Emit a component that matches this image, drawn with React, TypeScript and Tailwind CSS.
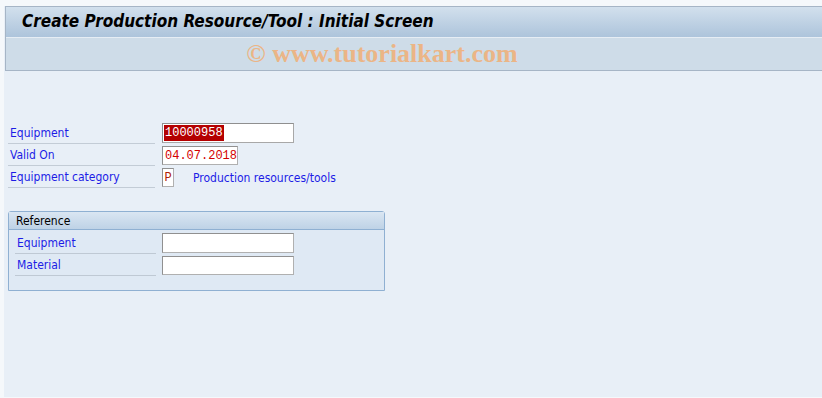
import React from "react";

const labelFont = { fontFamily: "'DejaVu Sans Condensed', 'DejaVu Sans', sans-serif" };

function Row({
  label,
  children,
}: {
  label: string;
  children?: React.ReactNode;
}) {
  return (
    <div className="flex h-[22px] items-stretch">
      <div
        className="w-[147px] flex items-center border-b border-[#c3ccd6] text-[12px] text-[#1c1ce6] pl-[2px] pt-[1px] shrink-0"
        style={labelFont}
      >
        {label}
      </div>
      {children}
    </div>
  );
}

export default function App() {
  return (
    <div className="w-[822px] h-[398px] bg-[#f5f8fb] pt-[6px] pl-[4px] pb-[1px] overflow-hidden">
      <div className="h-full bg-[#e8eff7] flex flex-col">
        {/* Header */}
        <div className="ml-[1px] border-t border-l border-b border-[#a6b5c6]">
          <div className="h-[30px] bg-gradient-to-b from-[#d2e0ed] to-[#adc4db] flex items-center pl-[16px]">
            <span
              className="text-[17px] font-bold italic text-black"
              style={{ fontFamily: "'DejaVu Sans Condensed', 'DejaVu Sans', sans-serif" }}
            >
              Create Production Resource/Tool : Initial Screen
            </span>
          </div>
          <div className="h-[1px] bg-[#e6edf4]" />
          <div className="h-[32px] bg-[#cedce8] flex items-center justify-center pr-[64px] pb-[1px]">
            <span
              className="text-[26px] font-bold text-[#ebb586]"
              style={{ fontFamily: "'Liberation Serif', serif" }}
            >
              © www.tutorialkart.com
            </span>
          </div>
        </div>

        {/* Main fields */}
        <div className="mt-[51px] pl-[4px] flex flex-col">
          <Row label="Equipment">
            <div className="ml-[7px] mt-[1px] h-[20px] w-[132px] bg-white border border-[#a8a8a8] border-t-[#8f8f8f] border-l-[#8f8f8f] flex items-center pl-[1px]">
              <span
                className="bg-[#b40000] text-white text-[12px] leading-[16px] px-[1px]"
                style={{ fontFamily: "'Liberation Mono', monospace" }}
              >
                10000958
              </span>
            </div>
          </Row>
          <Row label="Valid On">
            <div className="ml-[7px] mt-[2px] h-[19px] w-[76px] bg-white border border-[#b0b0b0] border-t-[#909090] border-l-[#909090] flex items-center pl-[2px]">
              <span
                className="text-[#d40000] text-[12px] leading-[16px]"
                style={{ fontFamily: "'Liberation Mono', monospace" }}
              >
                04.07.2018
              </span>
            </div>
          </Row>
          <Row label="Equipment category">
            <div className="ml-[7px] mt-[2px] h-[19px] w-[12px] bg-white border border-[#b0b0b0] border-t-[#909090] border-l-[#909090] flex items-center justify-center">
              <span
                className="text-[#b02000] text-[12px] leading-[16px]"
                style={{ fontFamily: "'Liberation Mono', monospace" }}
              >
                P
              </span>
            </div>
            <div
              className="ml-[19px] pt-[1px] flex items-center text-[12px] text-[#1c1ce6]"
              style={labelFont}
            >
              Production resources/tools
            </div>
          </Row>
        </div>

        {/* Reference group */}
        <div className="mt-[23px] ml-[4px] w-[377px] h-[80px] border border-[#8fb0d2] rounded-t-[3px] bg-[#dfe9f4] flex flex-col">
          <div
            className="h-[18px] bg-gradient-to-b from-[#dae6f2] to-[#bed2e6] border-b border-[#8fb0d2] flex items-center pl-[7px] text-[12px] text-black"
            style={labelFont}
          >
            Reference
          </div>
          <div className="mt-[2px] pl-[6px] flex flex-col">
            <div className="flex h-[22px] items-stretch">
              <div
                className="w-[141px] flex items-center border-b border-[#bfc9d4] text-[12px] text-[#1c1ce6] pl-[2px] pt-[1px] shrink-0"
                style={labelFont}
              >
                Equipment
              </div>
              <div className="ml-[6px] mt-[1px] h-[20px] w-[132px] bg-white border border-[#b0b0b0] border-t-[#909090] border-l-[#909090]" />
            </div>
            <div className="flex h-[22px] items-stretch">
              <div
                className="w-[141px] flex items-center border-b border-[#bfc9d4] text-[12px] text-[#1c1ce6] pl-[2px] pt-[1px] shrink-0"
                style={labelFont}
              >
                Material
              </div>
              <div className="ml-[6px] mt-[2px] h-[19px] w-[132px] bg-white border border-[#b0b0b0] border-t-[#909090] border-l-[#909090]" />
            </div>
          </div>
        </div>
      </div>
    </div>
  );
}
